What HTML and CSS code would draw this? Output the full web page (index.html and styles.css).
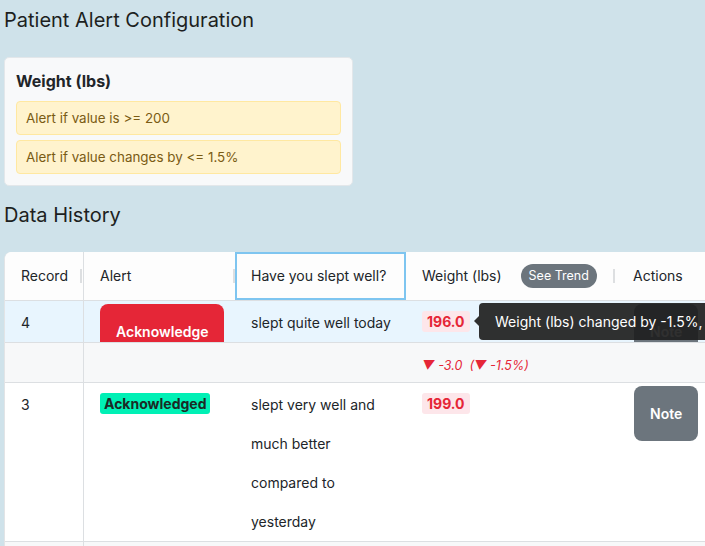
FILE: index.html
```html
<!DOCTYPE html>
<html lang="en">
<head>
<meta charset="utf-8">
<title>Patient Alert Configuration</title>
<link rel="stylesheet" href="styles.css">
</head>
<body>
  <h1 class="page-title">Patient Alert Configuration</h1>
  <section class="config-card">
    <h2 class="config-title">Weight (lbs)</h2>
    <div class="alert-rule">Alert if value is &gt;= 200</div>
    <div class="alert-rule">Alert if value changes by &lt;= 1.5%</div>
  </section>

  <h1 class="page-title section-title">Data History</h1>

  <div class="grid">
    <div class="row header">
      <div class="cell col-record"><span>Record</span><i class="handle"></i></div>
      <div class="cell"><span>Alert</span><i class="handle"></i></div>
      <div class="cell focused"><span>Have you slept well?</span><i class="handle"></i></div>
      <div class="cell"><span>Weight (lbs)</span><span class="pill">See Trend</span><i class="handle"></i></div>
      <div class="cell"><span>Actions</span></div>
    </div>

    <div class="row row-selected">
      <div class="cell col-record">4</div>
      <div class="cell clip"><button class="btn btn-danger">Acknowledge</button></div>
      <div class="cell">slept quite well today</div>
      <div class="cell tip-anchor">
        <span class="badge badge-red">196.0</span>
        <div class="tooltip">Weight (lbs) changed by -1.5%, exceeding the alert threshold</div>
      </div>
      <div class="cell clip"><button class="btn btn-note">Note</button></div>
    </div>

    <div class="row row-detail">
      <div class="cell col-record"></div>
      <div class="cell"></div>
      <div class="cell"></div>
      <div class="cell"><span class="delta">▼ -3.0 &nbsp;(▼ -1.5%)</span></div>
      <div class="cell"></div>
    </div>

    <div class="row row-plain">
      <div class="cell col-record">3</div>
      <div class="cell"><span class="badge badge-green">Acknowledged</span></div>
      <div class="cell wrap">slept very well and much better compared to yesterday</div>
      <div class="cell"><span class="badge badge-red">199.0</span></div>
      <div class="cell"><button class="btn btn-note">Note</button></div>
    </div>

    <div class="row row-detail">
      <div class="cell col-record"></div>
      <div class="cell"></div>
      <div class="cell"></div>
      <div class="cell"></div>
      <div class="cell"></div>
    </div>
  </div>
</body>
</html>
```

FILE: styles.css
```css
html, body {
  margin: 0;
  overflow: hidden;
}
body {
  background: #cfe2ea;
  padding: 0 0 0 4px;
  font-family: Inter, "Noto Sans", sans-serif;
  color: #212529;
  font-size: 14px;
}
.page-title {
  margin: 8px 0 0;
  font-size: 20px;
  line-height: 24px;
  font-weight: 400;
  color: #1d1f21;
}
.section-title {
  margin-top: 17px;
}
.config-card {
  width: 325px;
  margin-top: 25px;
  background: #f8f9fa;
  border: 1px solid #e3e7ea;
  border-radius: 5px;
  padding: 11px;
  display: flex;
  flex-direction: column;
  gap: 5px;
}
.config-title {
  margin: 0 0 3px;
  font-size: 16px;
  line-height: 24px;
  font-weight: 700;
  color: #212529;
}
.alert-rule {
  height: 32px;
  line-height: 32px;
  padding: 0 9px;
  background: #fff3cd;
  border: 1px solid #ffe8a1;
  border-radius: 4px;
  font-size: 13.4px;
  color: #7a5b14;
}

.grid {
  margin-top: 25px;
  width: 778px;
  background: #ffffff;
  border-left: 1px solid #e2e4e6;
  border-top-left-radius: 7px;
}
.row {
  display: grid;
  grid-template-columns: 79px 151px 171px 211px 160px;
  border-bottom: 1px solid #dcdfe2;
}
.cell {
  padding: 2px 0 0 16px;
  line-height: 39px;
  position: relative;
}
.col-record {
  border-right: 1px solid #dcdfe2;
}
.header {
  height: 48px;
  background: #fdfdfd;
  border-top-left-radius: 7px;
}
.header .cell {
  padding: 0 0 0 16px;
  display: flex;
  align-items: center;
  line-height: 20px;
}
.header .col-record {
  padding-right: 1px;
}
.handle {
  margin-left: auto;
  width: 2px;
  height: 14px;
  background: #dddfe1;
}
.focused {
  outline: 2px solid #7ec5f0;
  outline-offset: -2px;
}
.pill {
  margin-left: 19px;
  background: #6c757d;
  color: #ffffff;
  font-size: 12.5px;
  line-height: 24px;
  height: 24px;
  padding: 0 8px;
  border-radius: 12px;
}
.header .cell:nth-child(4) .handle {
  margin-right: 2px;
}

.row-selected {
  height: 41px;
  background: #e8f5fe;
}
.row-detail {
  height: 39px;
  background: #f7f8f9;
}
.row-plain {
  height: 158px;
  background: #ffffff;
}
.clip {
  overflow: hidden;
}
.wrap {
  padding-right: 20px;
}

.btn {
  font-family: Inter, "Noto Sans", sans-serif;
  font-size: 14px;
  font-weight: 600;
  line-height: 19px;
  padding: 18px 16px;
  border: none;
  border-radius: 8px;
  color: #ffffff;
  vertical-align: top;
  margin-top: 1px;
}
.btn-danger {
  background: #e52637;
}
.btn-note {
  background: #6c757d;
  margin-left: 1px;
}

.badge {
  display: inline-block;
  line-height: 21px;
  padding: 0 5px;
  border-radius: 3px;
  font-weight: 700;
  vertical-align: 1px;
}
.badge-red {
  background: #fde6ea;
  color: #e52637;
}
.badge-green {
  background: #00f0b5;
  color: #1b2a26;
  padding: 0 4px;
}
.delta {
  color: #e52637;
  font-style: italic;
  font-size: 12.5px;
}

.tip-anchor {
  z-index: 2;
}
.tooltip {
  position: absolute;
  left: 73px;
  top: 2px;
  height: 37px;
  line-height: 37px;
  padding: 0 16px;
  white-space: nowrap;
  color: #ffffff;
  font-size: 14px;
  background: rgba(30, 30, 30, 0.92);
  border-radius: 4px;
}
.tooltip::before {
  content: "";
  position: absolute;
  left: -5px;
  top: 13px;
  border-style: solid;
  border-width: 5px 5px 5px 0;
  border-color: transparent rgba(30, 30, 30, 0.92) transparent transparent;
}
```
